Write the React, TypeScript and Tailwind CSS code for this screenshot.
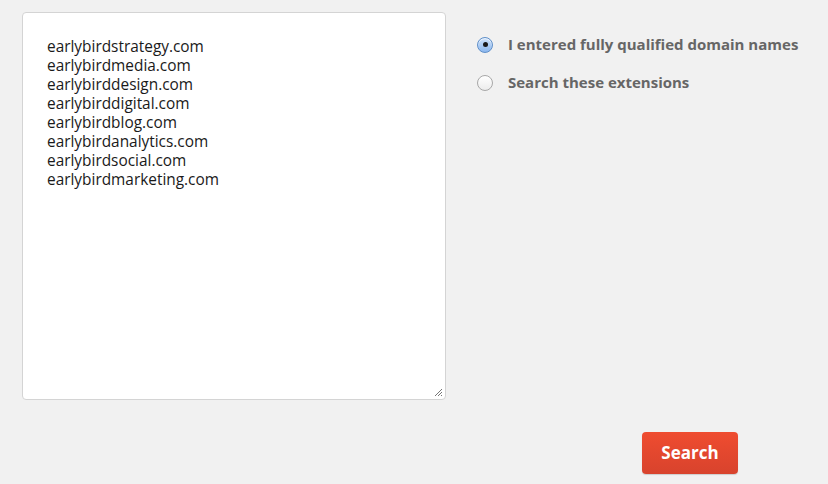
import React from "react"

const domains = [
  "earlybirdstrategy.com",
  "earlybirdmedia.com",
  "earlybirddesign.com",
  "earlybirddigital.com",
  "earlybirdblog.com",
  "earlybirdanalytics.com",
  "earlybirdsocial.com",
  "earlybirdmarketing.com"
]

function Radio({ checked, label }: { checked?: boolean; label: string }) {
  return (
    <label className="flex items-center gap-[15px] h-[19px]">
      {checked ? (
        <span className="w-[16px] h-[16px] rounded-full border border-[#5f8fc9] bg-gradient-to-b from-[#cfe3fb] to-[#8cb8ef] flex items-center justify-center shadow-[inset_0_1px_1px_rgba(255,255,255,0.8)]">
          <span className="w-[5px] h-[5px] rounded-full bg-[#1a1a1a]" />
        </span>
      ) : (
        <span className="w-[16px] h-[16px] rounded-full border border-[#a8a8a8] bg-gradient-to-b from-[#ffffff] to-[#ececec]" />
      )}
      <span className="text-[15px] font-bold text-[#666666]">{label}</span>
    </label>
  )
}

export default function App() {
  return (
    <div
      className="w-[828px] h-[484px] bg-[#f1f1f1] flex"
      style={{ fontFamily: "'Open Sans', Lato, sans-serif" }}
    >
      <div className="pl-[22px] pt-[12px]">
        <div className="relative w-[424px] h-[388px] bg-white border border-[#d4d4d4] rounded-[4px] pl-[24px] pt-[24px]">
          <div className="text-[15.4px] leading-[19px] text-[#1a1a1a]">
            {domains.map((d) => (
              <div key={d}>{d}</div>
            ))}
          </div>
          <svg
            className="absolute right-[2px] bottom-[2px]"
            width="9"
            height="9"
            viewBox="0 0 9 9"
          >
            <path d="M8 1 L1 8 M8 4 L4 8 M8 7 L7 8" stroke="#777" strokeWidth="1" />
          </svg>
        </div>
      </div>
      <div className="flex-1 flex flex-col pl-[31px] pt-[35px] pr-[20px]">
        <div className="flex flex-col gap-[19px]">
          <Radio checked label="I entered fully qualified domain names" />
          <Radio label="Search these extensions" />
        </div>
        <div className="mt-auto mb-[10px] pl-[165px]">
          <button className="w-[96px] h-[42px] rounded-[4px] bg-gradient-to-b from-[#ef4c30] to-[#d8432d] text-white font-bold text-[17px] shadow-[0_1px_1px_rgba(0,0,0,0.15)]">
            Search
          </button>
        </div>
      </div>
    </div>
  )
}
